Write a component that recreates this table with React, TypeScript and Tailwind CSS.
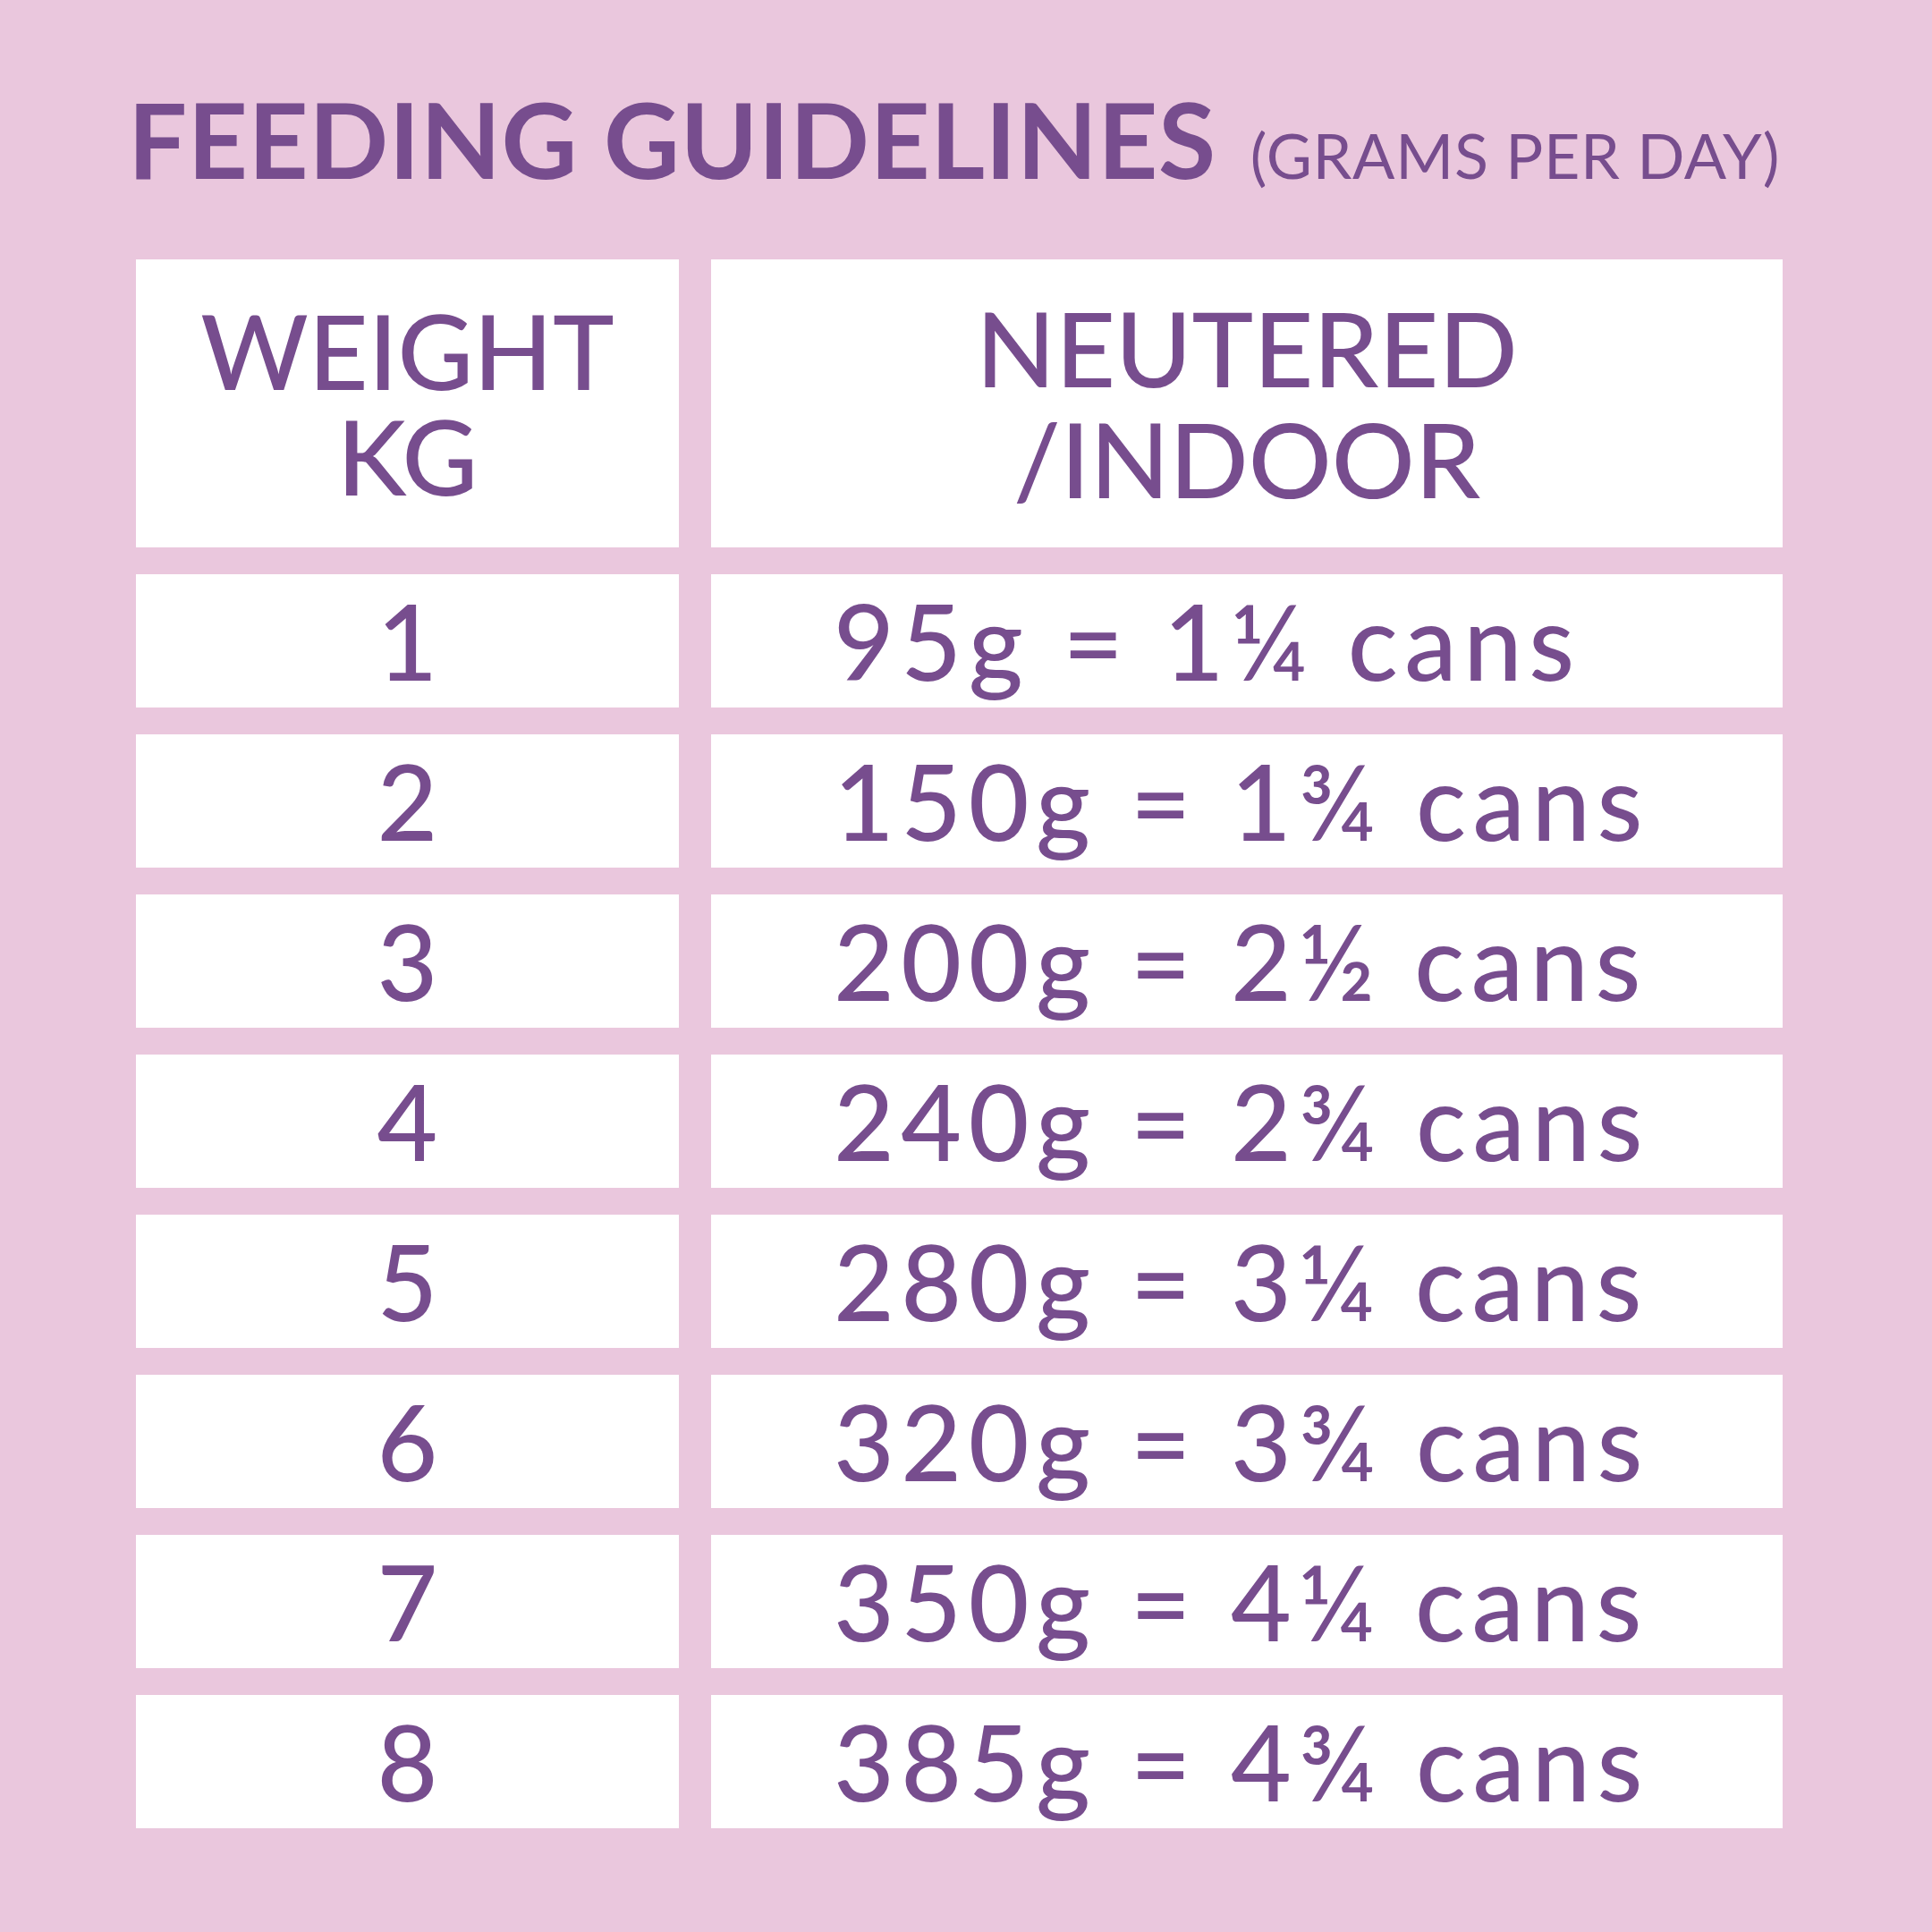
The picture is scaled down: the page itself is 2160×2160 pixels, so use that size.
import React from 'react';

const ROWS: { kg: string; text: string }[] = [
  { kg: '1', text: '95g = 1¼ cans' },
  { kg: '2', text: '150g = 1¾ cans' },
  { kg: '3', text: '200g = 2½ cans' },
  { kg: '4', text: '240g = 2¾ cans' },
  { kg: '5', text: '280g = 3¼ cans' },
  { kg: '6', text: '320g = 3¾ cans' },
  { kg: '7', text: '350g = 4¼ cans' },
  { kg: '8', text: '385g = 4¾ cans' },
];

function App() {
  return (
    <div
      className="w-[2160px] h-[2160px] bg-[#eac7dd] text-[#774d8e] pl-[152px] pt-[97px]"
      style={{ fontFamily: 'Lato, "Noto Sans", sans-serif' }}
    >
      {/* Title */}
      <div className="flex items-baseline leading-none -ml-[9px]">
        <h1 className="text-[117px] font-bold leading-none tracking-[0.5px]">FEEDING GUIDELINES</h1>
        <span className="ml-[38px] text-[70px] font-normal leading-none tracking-[0.7px]">(GRAMS PER DAY)</span>
      </div>

      {/* Table */}
      <div className="mt-[76px] grid grid-cols-[607px_1198px] gap-x-[36px] gap-y-[30px]">
        <div className="h-[322px] bg-white flex flex-col items-center justify-center text-center text-[116px] font-medium">
          <div className="h-[118px] leading-[118px]">WEIGHT</div>
          <div className="h-[118px] leading-[118px]">KG</div>
        </div>
        <div className="h-[322px] bg-white flex flex-col items-center justify-center text-center text-[116px] font-medium">
          <div className="h-[124px] leading-[124px]">NEUTERED</div>
          <div className="h-[124px] leading-[124px]">/INDOOR</div>
        </div>

        {ROWS.map((r) => (
          <React.Fragment key={r.kg}>
            <div className="h-[149px] bg-white flex items-center justify-center text-[117px] leading-none font-medium">
              {r.kg}
            </div>
            <div className="h-[149px] bg-white flex items-center pl-[137px] text-[117px] leading-none font-medium tracking-[7.5px] whitespace-nowrap">
              {r.text}
            </div>
          </React.Fragment>
        ))}
      </div>
    </div>
  );
}

export default App;
